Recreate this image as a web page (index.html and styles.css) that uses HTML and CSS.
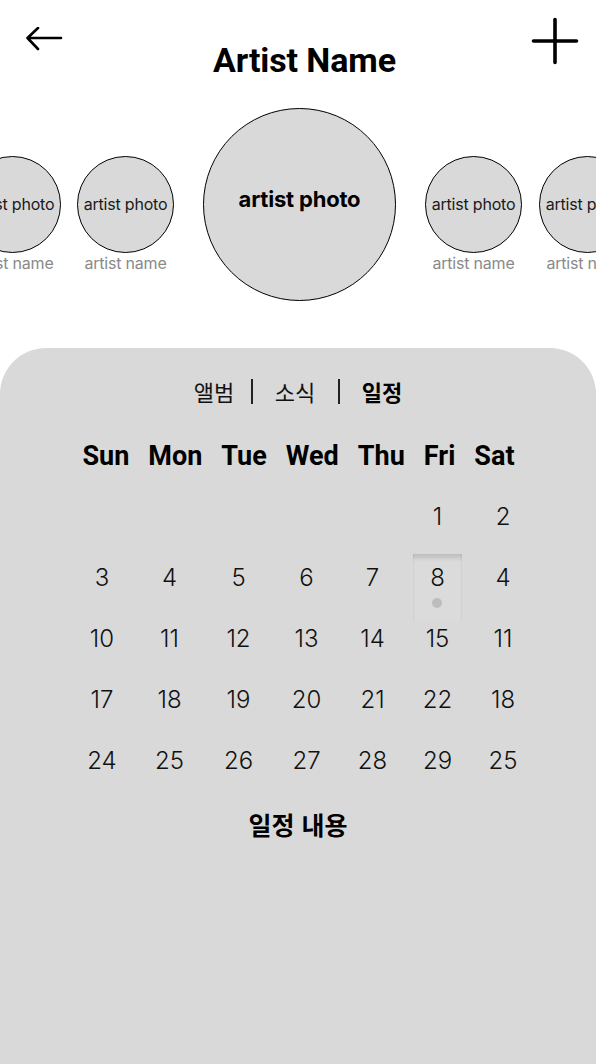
FILE: index.html
```html
<!DOCTYPE html>
<html lang="ko">
<head>
<meta charset="utf-8">
<link rel="stylesheet" href="styles.css">
<title>Artist</title>
</head>
<body>
<div class="page">
  <header class="topbar">
    <svg class="icon-back" width="40" height="28" viewBox="0 0 40 28">
      <path d="M37 11 H4 M14 1 L3.5 11 L14 22" fill="none" stroke="#000" stroke-width="2.6" stroke-linecap="round" stroke-linejoin="round"/>
    </svg>
    <h1 class="title">Artist Name</h1>
    <svg class="icon-plus" width="48" height="48" viewBox="0 0 48 48">
      <path d="M24 2.5 V45.5 M2.5 24 H45.5" fill="none" stroke="#000" stroke-width="3.6" stroke-linecap="round"/>
    </svg>
  </header>

  <section class="artists">
    <div class="artist small">
      <div class="photo">artist photo</div>
      <div class="name">artist name</div>
    </div>
    <div class="artist small">
      <div class="photo">artist photo</div>
      <div class="name">artist name</div>
    </div>
    <div class="artist big">
      <div class="photo">artist photo</div>
    </div>
    <div class="artist small gap-r">
      <div class="photo">artist photo</div>
      <div class="name">artist name</div>
    </div>
    <div class="artist small">
      <div class="photo">artist photo</div>
      <div class="name">artist name</div>
    </div>
  </section>

  <section class="panel">
    <nav class="tabs">
      <span class="tab first">앨범</span>
      <span class="sep"></span>
      <span class="tab mid">소식</span>
      <span class="sep"></span>
      <span class="tab active">일정</span>
    </nav>

    <div class="weekdays">
      <span>Sun</span><span>Mon</span><span>Tue</span><span>Wed</span><span>Thu</span><span>Fri</span><span>Sat</span>
    </div>

    <div class="dates">
      <span></span><span></span><span></span><span></span><span></span><span>1</span><span>2</span>
      <span>3</span><span>4</span><span>5</span><span>6</span><span>7</span><span class="selected"><i class="sel-box"><b class="dot"></b></i><em>8</em></span><span>4</span>
      <span>10</span><span>11</span><span>12</span><span>13</span><span>14</span><span>15</span><span>11</span>
      <span>17</span><span>18</span><span>19</span><span>20</span><span>21</span><span>22</span><span>18</span>
      <span>24</span><span>25</span><span>26</span><span>27</span><span>28</span><span>29</span><span>25</span>
    </div>

    <h2 class="schedule">일정 내용</h2>
  </section>
</div>
</body>
</html>
```

FILE: styles.css
```css
* { box-sizing: border-box; }

html, body {
  margin: 0;
  padding: 0;
  background: #fff;
}

.page {
  width: 596px;
  height: 1064px;
  overflow: hidden;
  display: flex;
  flex-direction: column;
  font-family: Inter, "Noto Sans CJK KR", sans-serif;
  color: #000;
}

/* top bar */
.topbar {
  display: flex;
  align-items: flex-start;
  padding: 0 17px 0 24px;
  height: 108px;
}
.icon-back { margin-top: 27px; flex: none; }
.icon-plus { margin-top: 17px; flex: none; }
.title {
  flex: 1;
  margin: 40px 0 0;
  padding-left: 14px;
  text-align: center;
  font-family: Roboto, "Liberation Sans", sans-serif;
  font-weight: 700;
  font-size: 34px;
  line-height: 40px;
  letter-spacing: -0.1px;
}

/* artists carousel */
.artists {
  display: flex;
  justify-content: center;
  align-items: flex-start;
  gap: 16px;
  height: 240px;
  padding-left: 4px;
}
.artist {
  flex: none;
  display: flex;
  flex-direction: column;
  align-items: center;
}
.artist.small { margin-top: 48px; width: 97px; }
.artist.big { width: 193px; margin: 0 13px; }
.artist.gap-r { margin-right: 1px; }

.photo {
  display: flex;
  align-items: center;
  justify-content: center;
  border-radius: 50%;
  background: #d9d9d9;
  border: 1.5px solid #000;
  white-space: nowrap;
}
.small .photo {
  width: 97px;
  height: 97px;
  font-size: 16px;
  font-weight: 400;
  color: #1a1a1a;
  letter-spacing: -0.2px;
  padding-bottom: 1px;
}
.big .photo {
  width: 193px;
  height: 193px;
  font-size: 22px;
  font-weight: 700;
  padding-bottom: 12px;
  letter-spacing: -0.2px;
}
.name {
  margin-top: 1px;
  font-size: 16px;
  line-height: 18px;
  color: #8a8a8a;
  white-space: nowrap;
  letter-spacing: -0.2px;
}

/* panel */
.panel {
  flex: 1;
  background: #d9d9d9;
  border-radius: 46px 46px 0 0;
  padding-top: 28px;
  display: flex;
  flex-direction: column;
}

.tabs {
  display: flex;
  justify-content: center;
  align-items: center;
  padding-left: 0;
  font-family: "Noto Sans CJK KR", sans-serif;
  font-size: 22px;
  line-height: 30px;
  color: #111;
}
.tab.first { margin-right: 17px; }
.tab.mid { margin: 0 23px 0 22px; }
.tab.active { margin-left: 22px; font-weight: 700; color: #000; }
.sep {
  width: 1.5px;
  height: 25px;
  background: #222;
}

.weekdays {
  margin-top: 34px;
  display: flex;
  justify-content: center;
  gap: 19px;
  font-family: Roboto, "Liberation Sans", sans-serif;
  font-weight: 700;
  font-size: 27px;
  line-height: 32px;
  padding-left: 1px;
}

.dates {
  margin-top: 14px;
  padding-left: 69px;
  display: grid;
  grid-template-columns: 66px 69px 69px 67px 65px 65px 66px;
  grid-auto-rows: 61px;
  font-size: 24px;
  font-weight: 300;
  color: #111;
}
.dates span {
  display: flex;
  align-items: center;
  justify-content: center;
  position: relative;
}
.dates em { font-style: normal; position: relative; }
.sel-box {
  position: absolute;
  left: 8px;
  top: 7px;
  width: 49px;
  height: 67px;
  background: #dbdbdb;
  box-shadow:
    inset 0 7px 4px -3px rgba(0, 0, 0, 0.13),
    inset 2px 0 2px -1px rgba(0, 0, 0, 0.05),
    inset -2px 0 2px -1px rgba(0, 0, 0, 0.05);
}
.dot {
  position: absolute;
  left: 19px;
  top: 44px;
  width: 10px;
  height: 10px;
  border-radius: 50%;
  background: #bdbdbd;
}

.schedule {
  margin: 17px 0 0;
  text-align: center;
  font-family: "Noto Sans CJK KR", sans-serif;
  font-weight: 700;
  font-size: 25px;
  line-height: 32px;
}
```
